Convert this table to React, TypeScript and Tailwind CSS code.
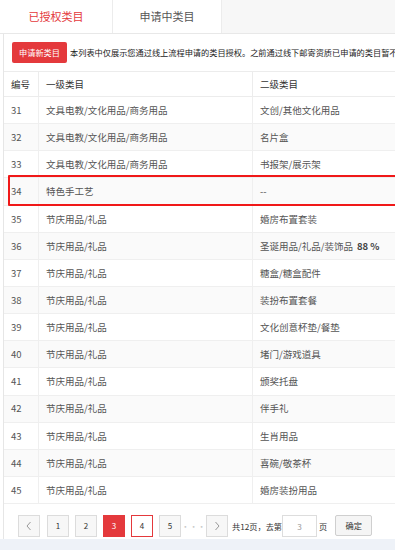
const rows = [
  { id: 31, cat1: "文具电教/文化用品/商务用品", cat2: "文创/其他文化用品" },
  { id: 32, cat1: "文具电教/文化用品/商务用品", cat2: "名片盒" },
  { id: 33, cat1: "文具电教/文化用品/商务用品", cat2: "书报架/展示架" },
  { id: 34, cat1: "特色手工艺", cat2: "--", marked: true },
  { id: 35, cat1: "节庆用品/礼品", cat2: "婚房布置套装" },
  { id: 36, cat1: "节庆用品/礼品", cat2: "圣诞用品/礼品/装饰品", extra: "88 %" },
  { id: 37, cat1: "节庆用品/礼品", cat2: "糖盒/糖盒配件" },
  { id: 38, cat1: "节庆用品/礼品", cat2: "装扮布置套餐" },
  { id: 39, cat1: "节庆用品/礼品", cat2: "文化创意杯垫/餐垫" },
  { id: 40, cat1: "节庆用品/礼品", cat2: "堵门/游戏道具" },
  { id: 41, cat1: "节庆用品/礼品", cat2: "颁奖托盘" },
  { id: 42, cat1: "节庆用品/礼品", cat2: "伴手礼" },
  { id: 43, cat1: "节庆用品/礼品", cat2: "生肖用品" },
  { id: 44, cat1: "节庆用品/礼品", cat2: "喜碗/敬茶杯" },
  { id: 45, cat1: "节庆用品/礼品", cat2: "婚房装扮用品" },
];

const font = { fontFamily: '"Noto Sans CJK SC", "Noto Sans", sans-serif' };

function PageBtn({ children, active, outlined }: { children: React.ReactNode; active?: boolean; outlined?: boolean }) {
  const cls = active
    ? "bg-[#e4393c] border-[#e4393c] text-white"
    : outlined
    ? "bg-white border-[#e4393c] text-[#333]"
    : "bg-[#f7f7f7] border-[#dcdcdc] text-[#333]";
  return (
    <div className={`w-[22px] h-[22px] flex items-center justify-center border text-[8px] ${cls}`}>
      {children}
    </div>
  );
}

export default function App() {
  return (
    <div className="w-[395px] h-[550px] overflow-hidden bg-white flex flex-col" style={font}>
      {/* Tabs */}
      <div className="flex h-[34px] bg-[#f7f7f7] border-b border-[#e8e8e8] shrink-0">
        <div className="w-[112px] bg-white flex items-center justify-center text-[11px] text-[#e4393c]">已授权类目</div>
        <div className="w-[110px] bg-white border-l border-r border-[#ececec] flex items-center justify-center text-[11px] text-[#555]">
          申请中类目
        </div>
      </div>

      {/* Panel */}
      <div className="flex-1 ml-[3px] border-l border-[#e6e6e6] flex flex-col overflow-hidden">
        <div className="flex items-center h-[37px] pl-[8px] shrink-0 whitespace-nowrap overflow-hidden">
          <div className="w-[55px] h-[21px] bg-[#e4393c] rounded-[2px] text-white text-[8.2px] flex items-center justify-center shrink-0">
            申请新类目
          </div>
          <span className="ml-[3px] text-[8.2px] text-[#222]">
            本列表中仅展示您通过线上流程申请的类目授权。之前通过线下邮寄资质已申请的类目暂不展示
          </span>
        </div>

        {/* Table */}
        <div className="w-[600px] shrink-0">
          <div className="flex h-[26px] border-t border-b border-[#ececec] text-[9.5px] text-[#333]">
            <div className="w-[35px] pl-[7px] flex items-center border-r border-[#ececec]">编号</div>
            <div className="w-[214px] pl-[7px] flex items-center border-r border-[#ececec]">一级类目</div>
            <div className="flex-1 pl-[7px] flex items-center">二级类目</div>
          </div>
          {rows.map((r) => (
            <div
              key={r.id}
              className={`relative flex h-[27.15px] border-b border-[#efefef] text-[9.5px] text-[#555] ${
                r.id % 2 === 0 ? "bg-[#fafafa]" : "bg-white"
              }`}
            >
              <div className="w-[35px] pl-[7px] flex items-center border-r border-[#efefef]">{r.id}</div>
              <div className="w-[214px] pl-[7px] flex items-center border-r border-[#efefef]">{r.cat1}</div>
              <div className="flex-1 pl-[7px] flex items-center gap-[4px]">
                {r.cat2}
                {r.extra && <span className="font-bold text-[#444]">{r.extra}</span>}
              </div>
              {r.marked && (
                <div className="absolute left-[4px] right-0 top-[-3px] bottom-[-1px] border-2 border-[#f01818] rounded-[1px]" />
              )}
            </div>
          ))}
        </div>

        {/* Pagination */}
        <div className="flex items-start pt-[11px] pl-[14px] whitespace-nowrap text-[8.2px] text-[#333]">
          <PageBtn>
            <svg width="8" height="10" viewBox="0 0 8 10" fill="none" stroke="#999" strokeWidth="1">
              <path d="M5.5 1 L2 5 L5.5 9" />
            </svg>
          </PageBtn>
          <div className="flex gap-[6px] ml-[7px]">
            <PageBtn>1</PageBtn>
            <PageBtn>2</PageBtn>
            <PageBtn active>3</PageBtn>
            <PageBtn outlined>4</PageBtn>
            <PageBtn>5</PageBtn>
          </div>
          <span className="w-[25px] h-[22px] flex items-center justify-center text-[#c8c8c8]">···</span>
          <PageBtn>
            <svg width="8" height="10" viewBox="0 0 8 10" fill="none" stroke="#999" strokeWidth="1">
              <path d="M2.5 1 L6 5 L2.5 9" />
            </svg>
          </PageBtn>
          <span className="ml-[4px] h-[22px] flex items-center">共12页，去第</span>
          <div className="w-[35px] h-[22px] border border-[#ddd] flex items-center justify-center text-[#999]">3</div>
          <span className="ml-[2px] h-[22px] flex items-center">页</span>
          <div className="ml-[8px] w-[37px] h-[21px] border border-[#cfcfcf] bg-[#f5f5f5] rounded-[2px] flex items-center justify-center">
            确定
          </div>
        </div>
      </div>
      <div className="h-[11px] bg-[#eef2f8] shrink-0" />
    </div>
  );
}
